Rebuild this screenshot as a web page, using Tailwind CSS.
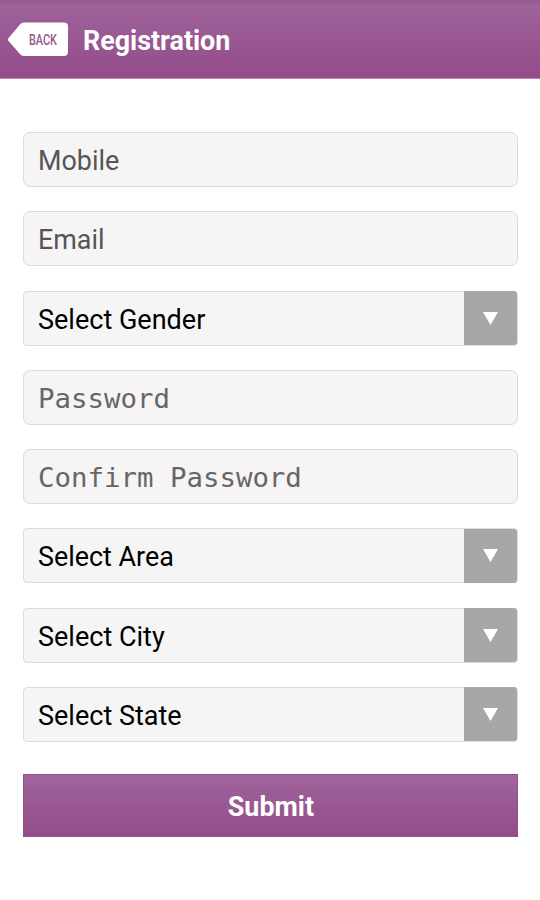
<!DOCTYPE html>
<html lang="en"><head><meta charset="utf-8"><title>Registration</title>
<script src="https://cdn.jsdelivr.net/npm/@tailwindcss/browser@4"></script></head>
<body class="bg-white font-['Roboto',sans-serif] text-[28px] leading-[32px]">
<header class="flex h-[79px] items-center border-b border-[#b98bb4] bg-linear-to-b from-[#935a8f] from-0% via-[#9f629a] via-8% to-[#924c8a] pl-[7px]">
<svg class="h-[36px] w-[62px]" viewBox="0 0 62 36"><path d="M17 1.500H57Q61 1.500 61 5.500V31Q61 35 57 35H17Q14.500 35 13 33L1.500 20Q.5 18.500 1.500 17L13 3.500Q14.500 1.500 17 1.500Z" fill="#fff"/><text x="22" y="23.500" font-size="14" font-weight="500" textLength="28" lengthAdjust="spacingAndGlyphs" fill="#96588f">BACK</text></svg>
<h1 class="ml-[14px] mt-[4px] origin-left scale-x-[.96] font-bold text-white">Registration</h1>
</header>
<main class="flex flex-col pl-[23px] pr-[22px] pt-[53px]">
<form class="flex flex-col gap-[24.250px]">
<div class="flex h-[55px] items-center rounded-[7px] border border-[#dcdadc] bg-[#f6f4f5] pl-[14px] text-[#555]"><span class="mt-[3px] origin-left scale-x-[.96]">Mobile</span></div>
<div class="flex h-[55px] items-center rounded-[7px] border border-[#dcdadc] bg-[#f6f4f5] pl-[14px] text-[#555]"><span class="mt-[3px] origin-left scale-x-[.96]">Email</span></div>
<div class="flex h-[55px] items-center rounded-[4px] border border-[#dcdcdc] bg-[#f5f5f5] pl-[14px] text-black"><span class="mt-[3px] origin-left scale-x-[.965]">Select Gender</span><span class="ml-auto flex h-[54px] w-[53px] items-center justify-center rounded-r-[3px] bg-[#a7a7a7]"><svg class="h-[13px] w-[15px]" viewBox="0 0 15 13"><path d="M0 0H15L7.500 13Z" fill="#fff"/></svg></span></div>
<div class="flex h-[55px] items-center rounded-[7px] border border-[#dcdadc] bg-[#f6f4f5] pl-[14px] font-['DejaVu_Sans_Mono',monospace] text-[27.400px] text-[#666]"><span class="mt-[3px]">Password</span></div>
<div class="flex h-[55px] items-center rounded-[7px] border border-[#dcdadc] bg-[#f6f4f5] pl-[14px] font-['DejaVu_Sans_Mono',monospace] text-[27.400px] text-[#666]"><span class="mt-[3px]">Confirm Password</span></div>
<div class="flex h-[55px] items-center rounded-[4px] border border-[#dcdcdc] bg-[#f5f5f5] pl-[14px] text-black"><span class="mt-[3px] origin-left scale-x-[.96]">Select Area</span><span class="ml-auto flex h-[54px] w-[53px] items-center justify-center rounded-r-[3px] bg-[#a7a7a7]"><svg class="h-[13px] w-[15px]" viewBox="0 0 15 13"><path d="M0 0H15L7.500 13Z" fill="#fff"/></svg></span></div>
<div class="flex h-[55px] items-center rounded-[4px] border border-[#dcdcdc] bg-[#f5f5f5] pl-[14px] text-black"><span class="mt-[3px] origin-left scale-x-[.965]">Select City</span><span class="ml-auto flex h-[54px] w-[53px] items-center justify-center rounded-r-[3px] bg-[#a7a7a7]"><svg class="h-[13px] w-[15px]" viewBox="0 0 15 13"><path d="M0 0H15L7.500 13Z" fill="#fff"/></svg></span></div>
<div class="flex h-[55px] items-center rounded-[4px] border border-[#dcdcdc] bg-[#f5f5f5] pl-[14px] text-black"><span class="mt-[3px] origin-left scale-x-[.965]">Select State</span><span class="ml-auto flex h-[54px] w-[53px] items-center justify-center rounded-r-[3px] bg-[#a7a7a7]"><svg class="h-[13px] w-[15px]" viewBox="0 0 15 13"><path d="M0 0H15L7.500 13Z" fill="#fff"/></svg></span></div>
<button type="button" class="mt-[7.750px] flex h-[63px] items-center justify-center border border-[#90528b] bg-linear-to-b from-[#a0649b] to-[#924c8a] font-bold text-white"><span class="mt-[3px] scale-x-[.96]">Submit</span></button>
</form>
</main>
</body></html>
